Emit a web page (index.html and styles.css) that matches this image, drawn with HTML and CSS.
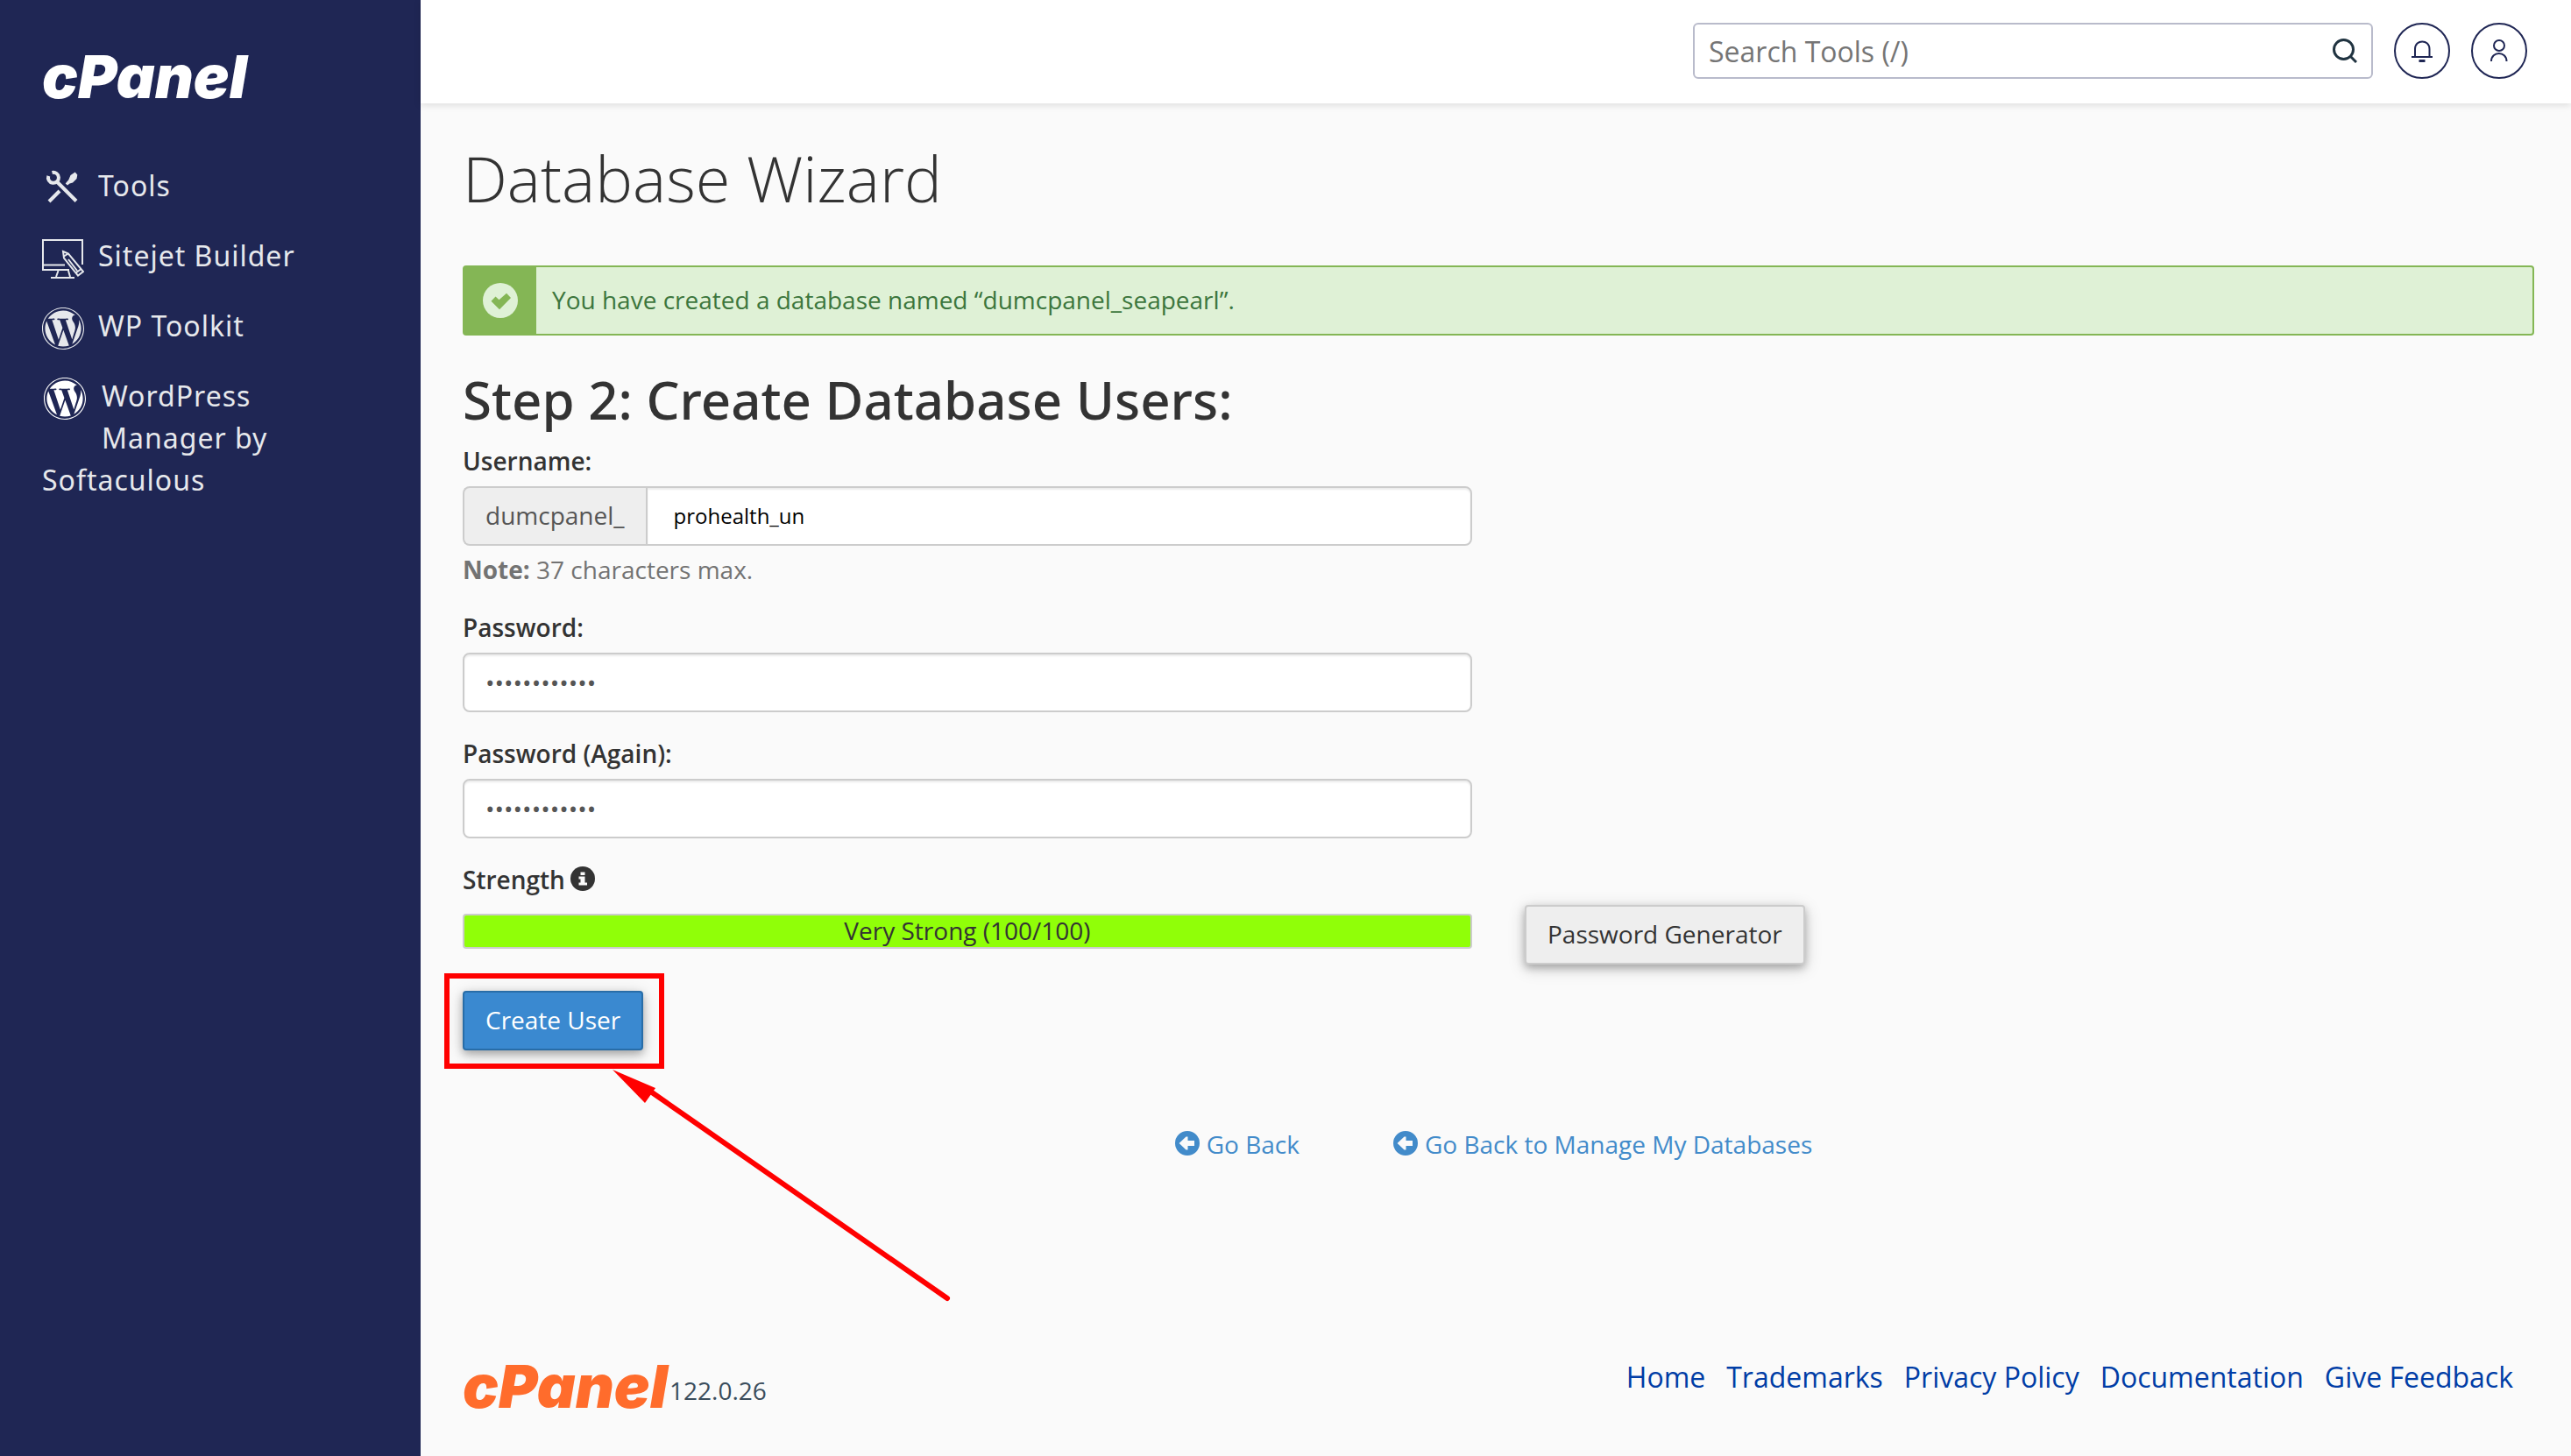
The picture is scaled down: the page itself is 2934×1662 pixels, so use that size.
FILE: index.html
```html
<!DOCTYPE html>
<html lang="en">
<head>
<meta charset="utf-8">
<meta name="viewport" content="width=device-width, initial-scale=1">
<title>cPanel - Database Wizard</title>
<link rel="stylesheet" href="styles.css">
</head>
<body>
<svg class="sprite" aria-hidden="true">
  <symbol id="wordpress" viewBox="8 8 496 496">
    <path d="M61.7 169.4l101.5 278C92.2 413 43.3 340.2 43.3 256c0-30.9 6.6-60.1 18.4-86.6zm337.9 75.9c0-26.3-9.4-44.5-17.5-58.7-10.8-17.5-20.9-32.4-20.9-49.9 0-19.6 14.8-37.8 35.7-37.8.9 0 1.8.1 2.8.2-37.9-34.7-88.3-55.9-143.7-55.9-74.3 0-139.7 38.1-177.8 95.9 5 .2 9.7.3 13.7.3 22.2 0 56.7-2.7 56.7-2.7 11.5-.7 12.8 16.2 1.4 17.5 0 0-11.5 1.3-24.3 2l77.5 230.4L249.8 247l-33.1-90.8c-11.5-.7-22.3-2-22.3-2-11.5-.7-10.1-18.2 1.3-17.5 0 0 35.1 2.7 56 2.7 22.2 0 56.7-2.7 56.7-2.7 11.5-.7 12.8 16.2 1.4 17.5 0 0-11.5 1.3-24.3 2l76.9 228.7 21.2-70.9c9-29.4 16-50.5 16-68.7zm-139.9 29.3l-63.8 185.5c19.1 5.6 39.2 8.7 60.1 8.7 24.8 0 48.5-4.3 70.6-12.1-.6-.9-1.1-1.9-1.5-2.9l-65.4-179.2zm183-120.7c.9 6.8 1.4 14 1.4 21.9 0 21.6-4 45.8-16.2 76.2l-65 187.9C426.2 403 468.7 334.5 468.7 256c0-37-9.4-71.8-26-102.1zM504 256c0 136.8-111.3 248-248 248C119.2 504 8 392.7 8 256 8 119.2 119.2 8 256 8c136.7 0 248 111.2 248 248zm-11.4 0c0-130.5-106.2-236.6-236.6-236.6C125.5 19.4 19.4 125.5 19.4 256S125.6 492.6 256 492.6c130.5 0 236.6-106.1 236.6-236.6z"/>
  </symbol>
  <symbol id="arrow-left" viewBox="0 0 28 28">
    <path fill-rule="evenodd" d="M14 0a14 14 0 1 0 0 28a14 14 0 1 0 0-28zM4.600 14L12.500 6.500H14.500V11H22V17H14.500V21.500H12.500z"/>
  </symbol>
</svg>

<div class="layout">
  <aside class="sidebar">
    <a class="brand" href="#">
      <svg class="logo" viewBox="0 0 240 84" role="img" aria-label="cPanel"><text x="0" y="66">cPanel</text></svg>
    </a>
    <nav class="nav" aria-label="Main">
      <a class="nav-item" href="#">
        <svg class="nav-icon" viewBox="0 0 48 48" aria-hidden="true">
          <g fill="none" stroke="currentColor" stroke-width="4">
            <path d="M7.300 9.800A6 6 0 1 0 11.500 6"/>
            <path d="M17 16.500L39 38.500"/>
            <path d="M20 27L8 39"/>
          </g>
          <path fill="currentColor" d="M26.700 18.500L30.300 14.300L32.500 9L37.700 5.500L40.300 8.500L39.500 13L35 17.500L31.500 18.500L29 20.500z"/>
        </svg>Tools</a>
      <a class="nav-item" href="#">
        <svg class="nav-icon" viewBox="0 0 48 48" aria-hidden="true" fill="none" stroke="currentColor" stroke-width="2">
          <path d="M31 37H1V3H46V31M1 31.500H26"/>
          <path d="M18.500 38L16 45M30 38L32 45M10 46H37"/>
          <path d="M24 16L30 18.500L47 39L41 43.500L25 23.500zM25 21.500L29 19M38.500 40.500L44 36.500M30 25L40 38"/>
        </svg>Sitejet Builder</a>
      <a class="nav-item" href="#">
        <svg class="nav-icon" fill="currentColor" aria-hidden="true"><use href="#wordpress"/></svg>WP Toolkit</a>
      <a class="nav-item" href="#">
        <svg class="nav-icon nav-icon-plugin" aria-hidden="true"><use href="#wordpress"/></svg>WordPress Manager by Softaculous</a>
    </nav>
  </aside>

  <div class="page">
    <header class="topbar">
      <form class="search" role="search">
        <input class="search-input" type="search" placeholder="Search Tools (/)" aria-label="Search Tools">
        <button class="search-button" type="button" aria-label="Search">
          <svg width="28" height="28" viewBox="0 0 28 28" fill="none" stroke="currentColor" stroke-width="3"><circle cx="12.500" cy="12.500" r="11"/><path d="M20 20L27 27"/></svg>
        </button>
      </form>
      <button class="round-button" type="button" aria-label="Notifications">
        <svg width="64" height="64" viewBox="0 0 64 64" fill="none" stroke="currentColor" stroke-width="2"><path d="M24 39V30C24 18.500 40.500 18.500 40.500 30V39M20 39H44"/><path stroke-width="3" d="M28.500 43.500H35.500"/></svg>
      </button>
      <button class="round-button" type="button" aria-label="Account">
        <svg width="64" height="64" viewBox="0 0 64 64" fill="none" stroke="currentColor" stroke-width="2"><circle cx="32" cy="26" r="6"/><path d="M23 44C23 32 40.500 32 40.500 44"/></svg>
      </button>
    </header>

    <main class="content">
      <h1 class="title">Database Wizard</h1>

      <div class="alert" role="status">
        <span class="alert-badge">
          <svg width="40" height="40" viewBox="0 0 40 40" aria-hidden="true"><circle cx="20" cy="20" r="20" fill="#dff1d6"/><path fill="#84b655" d="M9.500 20.700L14.500 15.500L18.500 19.300L27 11.700L32 17L19 30.300z"/></svg>
        </span>
        <p class="alert-text">You have created a database named “dumcpanel_seapearl”.</p>
      </div>

      <h2 class="step">Step 2: Create Database Users:</h2>

      <form class="form">
        <div class="field">
          <label class="label" for="username">Username:</label>
          <div class="input-group">
            <span class="prefix">dumcpanel_</span>
            <input class="input input-user" id="username" type="text" value="prohealth_un" aria-describedby="username-note">
          </div>
          <p class="note" id="username-note"><strong>Note:</strong> 37 characters max.</p>
        </div>
        <div class="field">
          <label class="label" for="password">Password:</label>
          <input class="input" id="password" type="password" value="abcdefghijkl">
        </div>
        <div class="field">
          <label class="label" for="password2">Password (Again):</label>
          <input class="input" id="password2" type="password" value="abcdefghijkl">
        </div>
        <div class="field strength">
          <span class="label">Strength
            <svg class="info" width="28" height="28" viewBox="0 0 28 28" aria-hidden="true"><circle cx="14" cy="14" r="14" fill="#333"/><path fill="#fafafa" d="M11.500 6.500H16.500V10H11.500zM9.500 11.500H16.500V18.500H19V21.500H9.500V18.500H11.500V14.500H9.500z"/></svg>
          </span>
          <div class="strength-row">
            <div class="meter">Very Strong (100/100)</div>
            <button class="button" type="button">Password Generator</button>
          </div>
        </div>
        <div class="submit">
          <button class="button button-primary" type="submit">Create User</button>
          <svg class="callout" width="580" height="380" viewBox="0 0 580 380" aria-hidden="true">
            <rect x="4" y="4" width="245" height="103" fill="none" stroke="#f00" stroke-width="6"/>
            <path d="M238 137L575 372" stroke="#f00" stroke-width="6" stroke-linecap="round"/>
            <path d="M193 111L242 132L230 149z" fill="#f00"/>
          </svg>
        </div>
      </form>

      <div class="back-links">
        <a class="back-link" href="#"><svg width="28" height="28" fill="currentColor" aria-hidden="true"><use href="#arrow-left"/></svg>Go Back</a>
        <a class="back-link" href="#"><svg width="28" height="28" fill="currentColor" aria-hidden="true"><use href="#arrow-left"/></svg>Go Back to Manage My Databases</a>
      </div>
    </main>

    <footer class="footer">
      <div class="footer-brand">
        <svg class="logo logo-orange" viewBox="0 0 240 84" role="img" aria-label="cPanel"><text x="0" y="66">cPanel</text></svg>
        <span class="version">122.0.26</span>
      </div>
      <nav class="footer-links" aria-label="Footer">
        <a href="#">Home</a>
        <a href="#">Trademarks</a>
        <a href="#">Privacy Policy</a>
        <a href="#">Documentation</a>
        <a href="#">Give Feedback</a>
      </nav>
    </footer>
  </div>
</div>
</body>
</html>
```

FILE: styles.css
```css
* {
  box-sizing: border-box;
}

body {
  margin: 0;
  background: #fafafa;
  color: #333;
  font: 28px/40px "Open Sans", "Noto Sans", sans-serif;
}

h1, h2, p {
  margin: 0;
}

a {
  text-decoration: none;
}

button, input {
  font: inherit;
}

svg {
  flex: none;
}

.sprite {
  display: none;
}

.layout {
  display: flex;
  min-height: 100vh;
}

/* Sidebar */

.sidebar {
  flex: none;
  width: 480px;
  padding: 46px 48px 48px;
  background: #1f2654;
  color: #e6e8ec;
}

.brand {
  display: block;
  color: #fff;
}

.logo {
  display: block;
  width: 240px;
  height: 84px;
  overflow: visible;
  fill: currentColor;
  font: italic 900 68px/1 Inter, sans-serif;
}

.nav {
  display: grid;
  gap: 29px;
  margin-top: 58px;
  font-family: "Noto Sans", "Open Sans", sans-serif;
  font-size: 32px;
  line-height: 48px;
  letter-spacing: 1px;
}

.nav-item {
  display: flow-root;
  color: inherit;
}

.nav-icon {
  float: left;
  width: 48px;
  height: 48px;
  margin: 3px 16px 0 0;
}

.nav-icon-plugin {
  margin: 3px 18px 0 2px;
  fill: #fff;
}

/* Top bar */

.page {
  display: flex;
  flex: 1;
  flex-direction: column;
  min-width: 0;
}

.topbar {
  display: flex;
  align-items: center;
  justify-content: flex-end;
  gap: 24px;
  height: 118px;
  padding: 0 50px 2px 48px;
  background: #fff;
  box-shadow: 0 2px 8px rgba(0, 0, 0, 0.12);
}

.search {
  display: flex;
  width: 776px;
  height: 64px;
  border: 2px solid #b9bbcb;
  border-radius: 6px;
  background: #fff;
}

.search-input {
  flex: 1;
  min-width: 0;
  padding: 1px 16px 0;
  border: 0;
  outline: 0;
  background: none;
  font-size: 32px;
}

.search-input::placeholder {
  color: #757575;
}

.search-button {
  display: flex;
  align-items: center;
  padding: 0 16px;
  border: 0;
  background: none;
  color: #203340;
}

.round-button {
  display: flex;
  align-items: center;
  justify-content: center;
  width: 64px;
  height: 64px;
  padding: 0;
  border: 2px solid #1f2654;
  border-radius: 50%;
  background: #fff;
  color: #1f2654;
}

/* Content */

.content {
  padding: 45px 42px 0 48px;
}

.title {
  font-size: 72px;
  font-weight: 300;
  line-height: 80px;
}

.alert {
  display: flex;
  margin-top: 60px;
  border: 2px solid #84b655;
  border-radius: 4px;
  background: #dff1d6;
  color: #3c763d;
}

.alert-badge {
  display: flex;
  align-items: center;
  justify-content: center;
  width: 82px;
  background: #84b655;
}

.alert-text {
  padding: 17px 18px 19px;
}

.step {
  margin-top: 40px;
  font-family: "Noto Sans", "Open Sans", sans-serif;
  font-size: 60px;
  font-weight: 500;
  line-height: 66px;
}

.form {
  max-width: 1152px;
  margin-top: 17px;
}

.field {
  margin-bottom: 27px;
}

.label {
  display: block;
  margin-bottom: 9px;
  font-weight: 600;
}

.input {
  display: block;
  width: 100%;
  height: 68px;
  padding: 0 24px;
  border: 2px solid #ccc;
  border-radius: 8px;
  outline: 0;
  background: #fff;
  box-shadow: inset 0 2px 2px rgba(0, 0, 0, 0.075);
  color: #555;
}

.input-group {
  display: flex;
}

.prefix {
  padding: 11px 24px 13px;
  border: 2px solid #ccc;
  border-right: 0;
  border-radius: 8px 0 0 8px;
  background: #eee;
  color: #555;
}

.input-user {
  flex: 1;
  padding: 0 30px 2px;
  border-radius: 0 8px 8px 0;
  color: #000;
  font-size: 24px;
}

.note {
  margin-top: 8px;
  color: #737373;
  line-height: 38px;
}

.strength .label {
  display: flex;
  gap: 6px;
}

.info {
  margin-top: 5px;
}

.strength-row {
  display: grid;
  grid-template-columns: 100% max-content;
  align-items: start;
  column-gap: 60px;
}

.meter {
  margin-top: 10px;
  padding-bottom: 2px;
  border: 2px solid #ccc;
  border-radius: 4px;
  background: #90ff08;
  line-height: 34px;
  text-align: center;
}

.button {
  height: 68px;
  padding: 0 24px 2px;
  border: 2px solid #ccc;
  border-radius: 4px;
  background: #eee;
  box-shadow: 0 4px 10px rgba(0, 0, 0, 0.26), 0 4px 20px rgba(0, 0, 0, 0.16);
  color: #333;
}

.button-primary {
  border-color: #286da8;
  background: #3a89d0;
  color: #fff;
}

.submit {
  display: flex;
  position: relative;
  margin-top: 30px;
}

/* Hand-drawn marker over the submit button */
.callout {
  position: absolute;
  top: -21px;
  left: -22px;
  pointer-events: none;
}

.back-links {
  display: flex;
  justify-content: center;
  gap: 107px;
  margin-top: 87px;
  padding-right: 11px;
}

.back-link {
  display: flex;
  gap: 8px;
  color: #428bca;
}

.back-link svg {
  margin-top: 5px;
}

/* Footer */

.footer {
  display: flex;
  align-items: flex-start;
  justify-content: space-between;
  margin-top: auto;
  padding: 0 66px 37px 48px;
}

.footer-brand {
  display: flex;
  align-items: flex-end;
  color: #3b4d5c;
}

.version {
  margin: 0 0 18px -4px;
}

.logo-orange {
  fill: #ff6c2c;
}

.footer-links {
  display: flex;
  gap: 24px;
  margin-top: 7px;
  font-size: 32px;
  line-height: 48px;
}

.footer-links a {
  color: #003da6;
}
```
